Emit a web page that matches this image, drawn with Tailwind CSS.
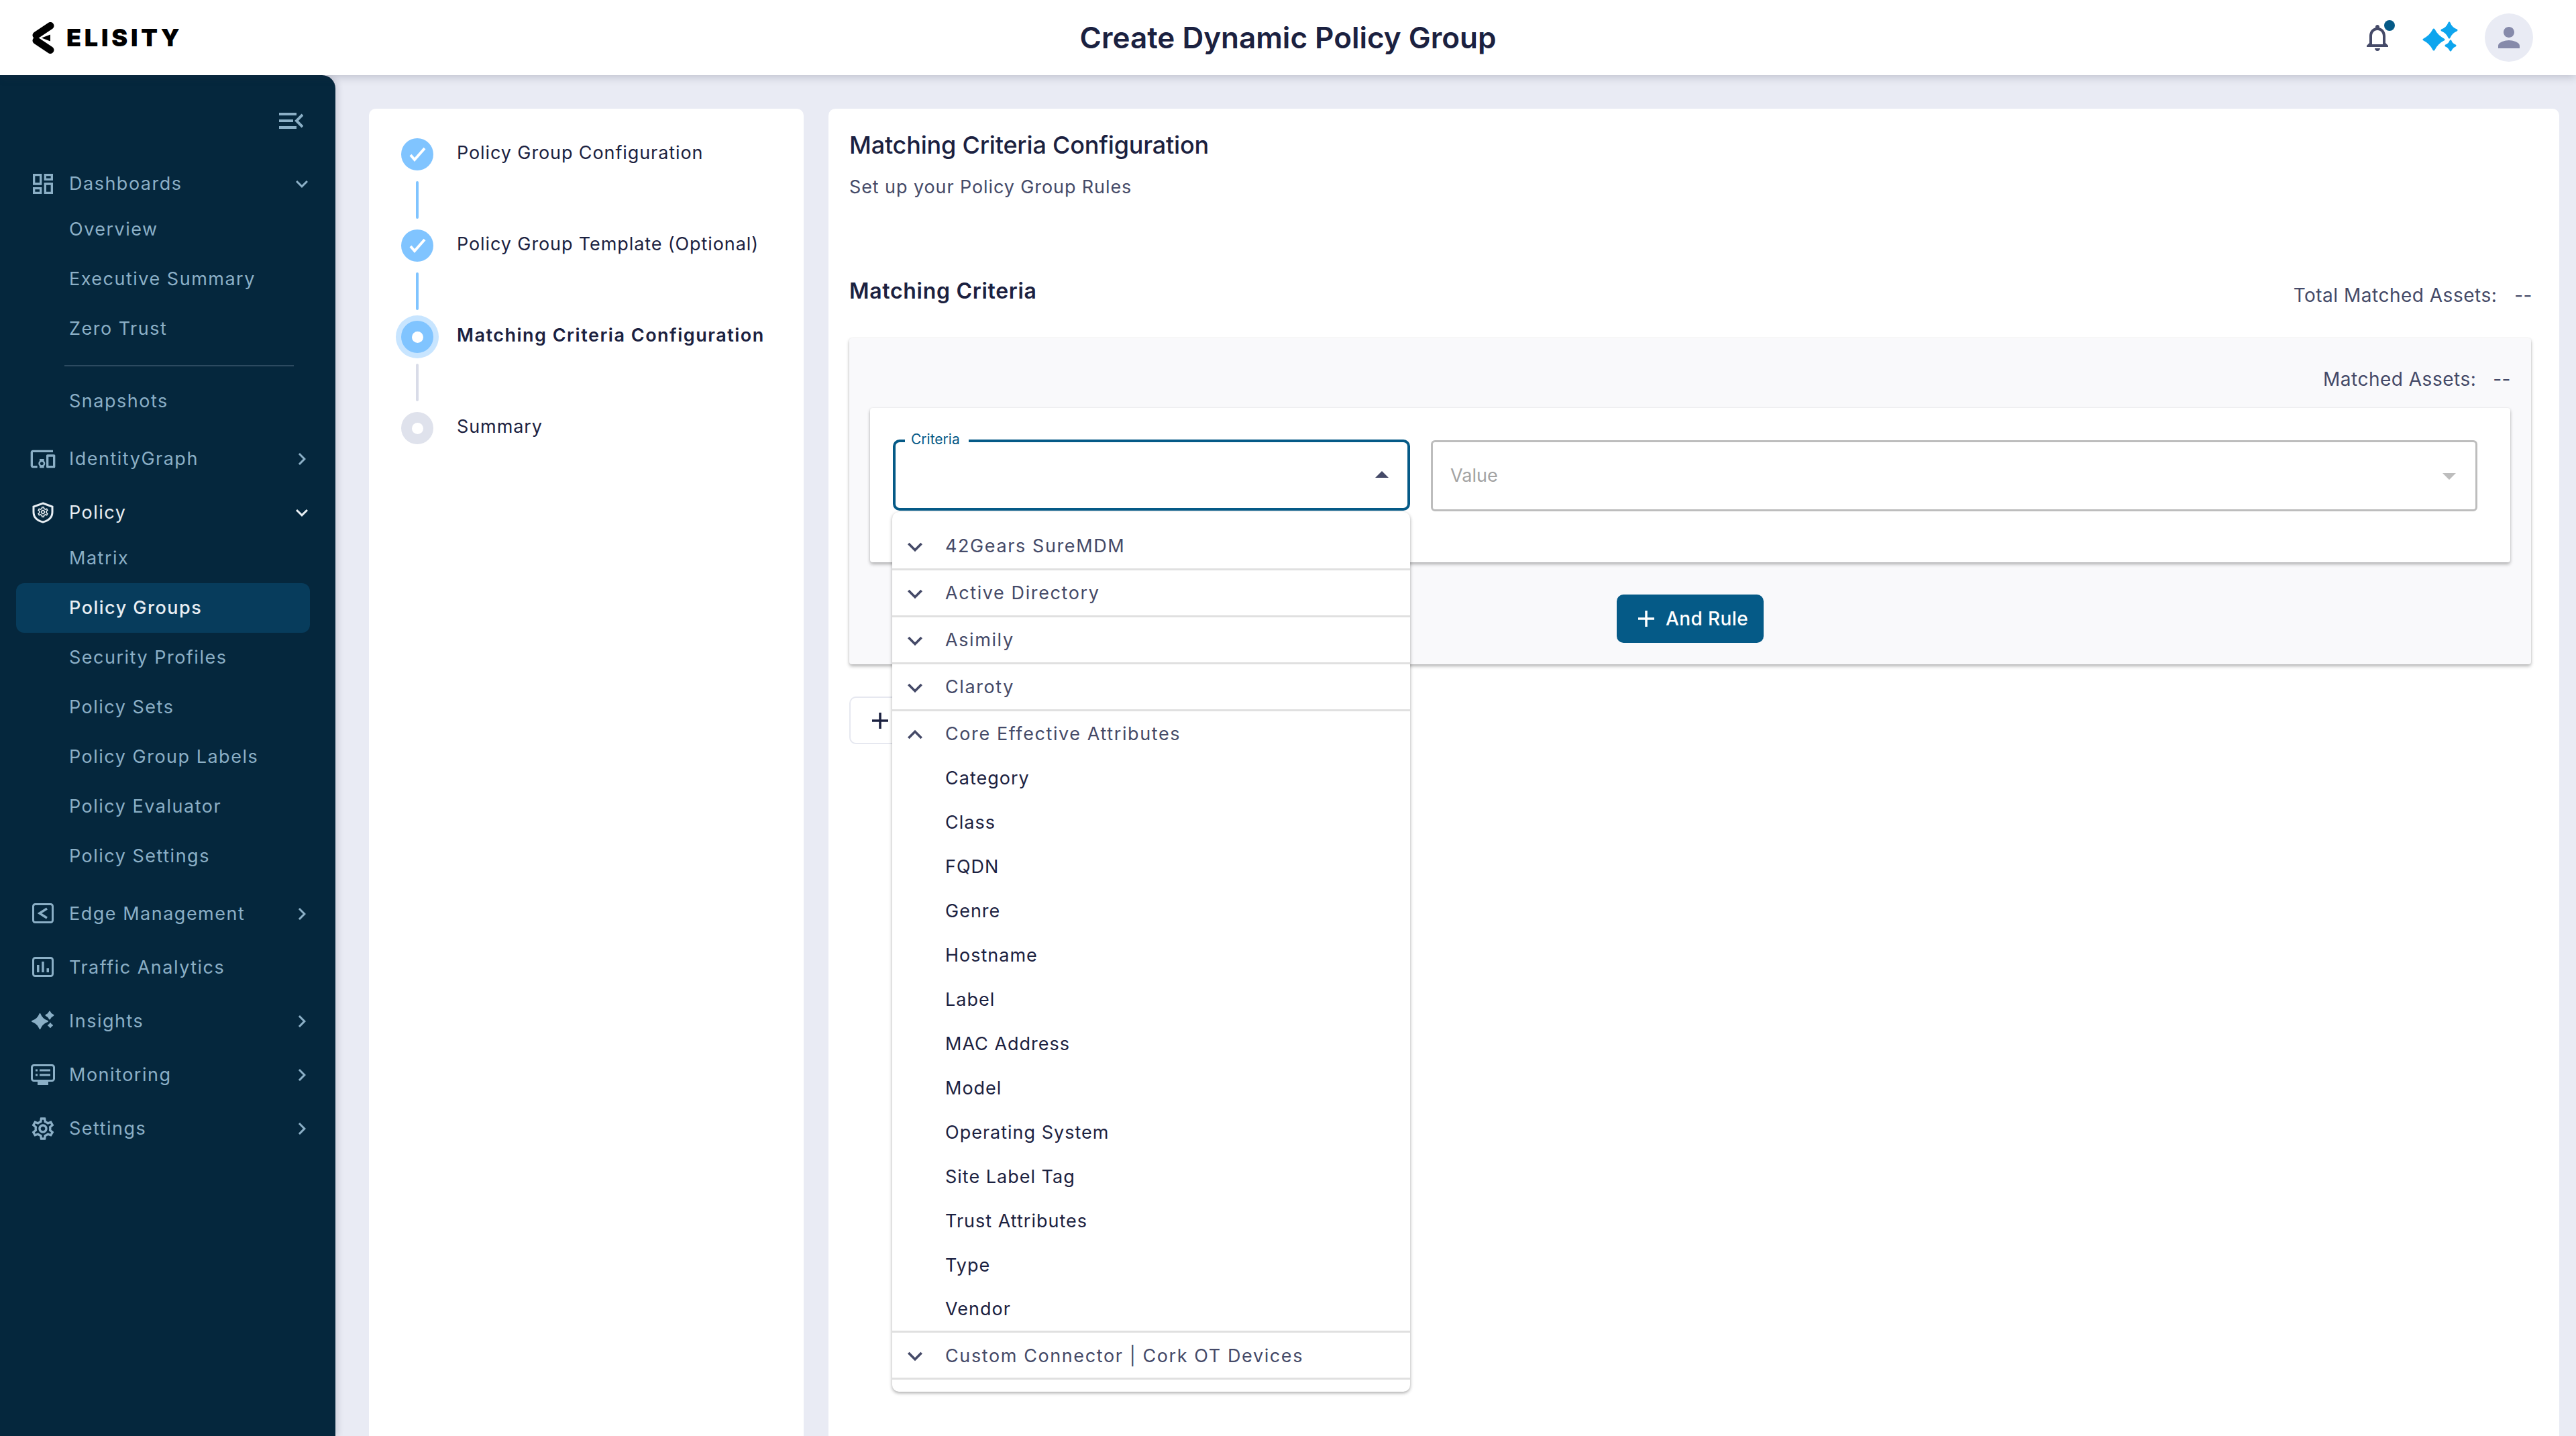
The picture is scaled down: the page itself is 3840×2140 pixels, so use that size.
<!DOCTYPE html>
<html lang="en">
<head>
    <meta charset="UTF-8">
    <meta name="viewport" content="width=device-width, initial-scale=1.0">
    <title>Create Dynamic Policy Group</title>
    <script src="https://cdn.jsdelivr.net/npm/@tailwindcss/browser@4"></script>
</head>
<body class="bg-[#e9ebf4] font-[Inter,sans-serif] h-[2140px] overflow-hidden flex flex-col">
    <!-- Header -->
    <header class="relative z-20 h-[112px] shrink-0 bg-white flex items-center justify-between pl-[48px] pr-[64px] shadow-[0_3px_12px_rgba(40,44,70,0.22)]">
        <div class="flex items-center w-[616px]">
            <svg width="33" height="47" viewBox="0 0 33 47" fill="none">
                <path d="M27 5.500 L6 19.500 M6 27.500 L27 41.500" stroke="#000" stroke-width="11" stroke-linecap="round"/>
                <path d="M14 23.500 L27 18.500 L27 28.500 Z" fill="#000"/>
            </svg>
            <span class="ml-[18px] text-[36px] leading-none font-black tracking-[4.8px] text-black">ELISITY</span>
        </div>
        <h1 class="text-[44px] font-semibold text-[#1b2140]">Create Dynamic Policy Group</h1>
        <div class="flex items-center justify-end w-[600px]">
            <div class="relative w-[48px] h-[48px]">
                <svg width="48" height="48" viewBox="0 0 24 24" fill="#454a68"><path d="M12 22c1.1 0 2-.9 2-2h-4c0 1.1.9 2 2 2zm6-6v-5c0-3.07-1.63-5.64-4.5-6.32V4c0-.83-.67-1.5-1.5-1.5s-1.5.67-1.5 1.5v.68C7.64 5.36 6 7.92 6 11v5l-2 2v1h16v-1l-2-2zm-2 1H8v-6c0-2.48 1.51-4.5 4-4.5s4 2.02 4 4.5v6z"/></svg>
                <span class="absolute left-[34px] top-[-2px] w-[16px] h-[16px] rounded-full bg-[#055a87]"></span>
            </div>
            <svg class="ml-[42px]" width="60" height="60" viewBox="0 0 60 60" fill="#0ea5ee" stroke="#0ea5ee" stroke-width="3" stroke-linejoin="round">
                <path d="M18 18 Q23 28 33 33 Q23 38 18 48 Q13 38 3 33 Q13 28 18 18Z"/>
                <path d="M41 8 Q44 16 52 19 Q44 22 41 30 Q38 22 30 19 Q38 16 41 8Z"/>
                <path d="M43 35 Q45 40 50 42 Q45 44 43 49 Q41 44 36 42 Q41 40 43 35Z"/>
            </svg>
            <div class="ml-[34px] w-[72px] h-[72px] rounded-full bg-[#e9ebf4] flex items-center justify-center">
                <svg width="48" height="48" viewBox="0 0 24 24" fill="#868aaa"><path d="M12 12c2.21 0 4-1.79 4-4s-1.79-4-4-4-4 1.79-4 4 1.79 4 4 4zm0 2c-2.67 0-8 1.34-8 4v2h16v-2c0-2.66-5.33-4-8-4z"/></svg>
            </div>
        </div>
    </header>

    <div class="flex flex-1 min-h-0">
        <!-- Sidebar -->
        <aside class="relative z-10 w-[500px] shrink-0 bg-[#05273d] rounded-tr-[20px] pt-[56px] shadow-[4px_0_10px_rgba(40,44,70,0.14)] text-[27px] tracking-[1.5px] text-[#8bafc6]">
            <div class="flex justify-end pr-[48px] mb-[51px]">
                <svg width="36" height="24" viewBox="0 0 36 24" fill="none" stroke="#8bafc6">
                    <path d="M0 2h26M0 12h21M0 22h26" stroke-width="4"/>
                    <path d="M35 3 L26 12 L35 21" stroke-width="4"/>
                </svg>
            </div>

            <nav class="flex flex-col gap-[18px]">
                <div>
                    <div class="flex items-center h-[62px] pl-[44px] pr-[32px]">
                        <svg width="40" height="40" viewBox="0 0 24 24" fill="#8bafc6"><path d="M19 5v2h-4V5h4M9 5v6H5V5h4m10 8v6h-4v-6h4M9 17v2H5v-2h4M21 3h-8v6h8V3zM11 3H3v10h8V3zm10 8h-8v10h8V11zm-10 4H3v6h8v-6z"/></svg>
                        <span class="ml-[19px]">Dashboards</span>
                        <svg class="ml-auto" width="36" height="36" viewBox="0 0 24 24" fill="#8bafc6"><path d="M7.41 8.59 12 13.17l4.59-4.58L18 10l-6 6-6-6 1.41-1.41z"/></svg>
                    </div>
                    <div class="flex items-center h-[74px] pl-[103px]">Overview</div>
                    <div class="flex items-center h-[74px] pl-[103px]">Executive Summary</div>
                    <div class="flex items-center h-[74px] pl-[103px]">Zero Trust</div>
                    <div class="ml-[96px] w-[342px] h-[2px] bg-[#2c4a60] mt-[17px] mb-[15px]"></div>
                    <div class="flex items-center h-[74px] pl-[103px]">Snapshots</div>
                </div>

                <div class="flex items-center h-[62px] pl-[44px] pr-[32px]">
                    <svg width="40" height="40" viewBox="0 0 24 24" fill="#8bafc6"><path d="M3 6h18V4H3c-1.1 0-2 .9-2 2v12c0 1.1.9 2 2 2h4v-2H3V6zm10 6H9v1.78c-.61.55-1 1.33-1 2.22s.39 1.67 1 2.22V20h4v-1.78c.61-.55 1-1.34 1-2.22s-.39-1.67-1-2.22V12zm-2 5.5c-.83 0-1.5-.67-1.5-1.5s.67-1.5 1.5-1.5 1.5.67 1.5 1.5-.67 1.5-1.5 1.5zM22 8h-6c-.5 0-1 .5-1 1v10c0 .5.5 1 1 1h6c.5 0 1-.5 1-1V9c0-.5-.5-1-1-1zm-1 10h-4v-8h4v8z"/></svg>
                    <span class="ml-[19px]">IdentityGraph</span>
                    <svg class="ml-auto" width="36" height="36" viewBox="0 0 24 24" fill="#8bafc6"><path d="M10 6 8.59 7.41 13.17 12l-4.58 4.59L10 18l6-6z"/></svg>
                </div>

                <div>
                    <div class="flex items-center h-[62px] pl-[44px] pr-[32px] text-[#e8eef3]">
                        <svg width="40" height="40" viewBox="0 0 40 40" fill="none">
                            <path d="M20 6 L34 11 V19 C34 27 28 32 20 34 C12 32 6 27 6 19 V11 Z" stroke="#e8eef3" stroke-width="3"/>
                            <g transform="translate(10.4 9.4) scale(.8)" fill="#e8eef3"><path d="M19.43 12.98c.04-.32.07-.64.07-.98 0-.34-.03-.66-.07-.98l2.11-1.65c.19-.15.24-.42.12-.64l-2-3.46c-.09-.16-.26-.25-.44-.25-.06 0-.12.01-.17.03l-2.49 1c-.52-.4-1.08-.73-1.69-.98l-.38-2.65C14.46 2.18 14.25 2 14 2h-4c-.25 0-.46.18-.49.42l-.38 2.65c-.61.25-1.17.59-1.69.98l-2.49-1c-.06-.02-.12-.03-.18-.03-.17 0-.34.09-.43.25l-2 3.46c-.13.22-.07.49.12.64l2.11 1.65c-.04.32-.07.65-.07.98 0 .33.03.66.07.98l-2.11 1.65c-.19.15-.24.42-.12.64l2 3.46c.09.16.26.25.44.25.06 0 .12-.01.17-.03l2.49-1c.52.4 1.08.73 1.69.98l.38 2.65c.03.24.24.42.49.42h4c.25 0 .46-.18.49-.42l.38-2.65c.61-.25 1.17-.59 1.69-.98l2.49 1c.06.02.12.03.18.03.17 0 .34-.09.43-.25l2-3.46c.12-.22.07-.49-.12-.64l-2.11-1.65zm-1.98-1.71c.04.31.05.52.05.73 0 .21-.02.43-.05.73l-.14 1.13.89.7 1.08.84-.7 1.21-1.27-.51-1.04-.42-.9.68c-.43.32-.84.56-1.25.73l-1.06.43-.16 1.13-.2 1.35h-1.4l-.19-1.35-.16-1.13-1.06-.43c-.43-.18-.83-.41-1.23-.71l-.91-.7-1.06.43-1.27.51-.7-1.21 1.08-.84.89-.7-.14-1.13c-.03-.31-.05-.54-.05-.74s.02-.43.05-.73l.14-1.13-.89-.7-1.08-.84.7-1.21 1.27.51 1.04.42.9-.68c.43-.32.84-.56 1.25-.73l1.06-.43.16-1.13.2-1.35h1.39l.19 1.35.16 1.13 1.06.43c.43.18.83.41 1.23.71l.91.7 1.06-.43 1.27-.51.7 1.21-1.07.85-.89.7.14 1.13zM12 8c-2.21 0-4 1.79-4 4s1.79 4 4 4 4-1.79 4-4-1.79-4-4-4zm0 6c-1.1 0-2-.9-2-2s.9-2 2-2 2 .9 2 2-.9 2-2 2z"/></g>
                        </svg>
                        <span class="ml-[19px]">Policy</span>
                        <svg class="ml-auto" width="36" height="36" viewBox="0 0 24 24" fill="#e8eef3"><path d="M7.41 8.59 12 13.17l4.59-4.58L18 10l-6 6-6-6 1.41-1.41z"/></svg>
                    </div>
                    <div class="flex items-center h-[74px] pl-[103px]">Matrix</div>
                    <div class="flex items-center h-[74px] ml-[24px] w-[438px] pl-[79px] rounded-[12px] bg-[#073c5c] text-[#e8eef3] font-medium">Policy Groups</div>
                    <div class="flex items-center h-[74px] pl-[103px]">Security Profiles</div>
                    <div class="flex items-center h-[74px] pl-[103px]">Policy Sets</div>
                    <div class="flex items-center h-[74px] pl-[103px]">Policy Group Labels</div>
                    <div class="flex items-center h-[74px] pl-[103px]">Policy Evaluator</div>
                    <div class="flex items-center h-[74px] pl-[103px]">Policy Settings</div>
                </div>

                <div class="flex items-center h-[62px] pl-[44px] pr-[32px]">
                    <svg width="40" height="40" viewBox="0 0 40 40" fill="none" stroke="#8bafc6">
                        <rect x="5.5" y="5.5" width="29" height="27" rx="3" stroke-width="3"/>
                        <path d="M26 12 L15 19 L26 26" stroke-width="3.5"/>
                    </svg>
                    <span class="ml-[19px]">Edge Management</span>
                    <svg class="ml-auto" width="36" height="36" viewBox="0 0 24 24" fill="#8bafc6"><path d="M10 6 8.59 7.41 13.17 12l-4.58 4.59L10 18l6-6z"/></svg>
                </div>
                <div class="flex items-center h-[62px] pl-[44px] pr-[32px]">
                    <svg width="40" height="40" viewBox="0 0 40 40" fill="none">
                        <rect x="5.5" y="5.5" width="29" height="27" rx="3" stroke="#8bafc6" stroke-width="3"/>
                        <path d="M11 16h3.500v11H11zM18.200 11h3.500v16h-3.500zM25.500 21H29v6h-3.500z" fill="#8bafc6"/>
                    </svg>
                    <span class="ml-[19px]">Traffic Analytics</span>
                </div>
                <div class="flex items-center h-[62px] pl-[44px] pr-[32px]">
                    <svg width="40" height="40" viewBox="0 0 40 40" fill="#8bafc6" stroke="#8bafc6" stroke-width="2" stroke-linejoin="round">
                        <path d="M15.500 9 Q18.500 17 27 20 Q18.500 23 15.500 31 Q12.500 23 4 20 Q12.500 17 15.500 9Z"/>
                        <path d="M30 5.500 Q31.500 9.500 35.500 11 Q31.500 12.500 30 16.500 Q28.500 12.500 24.500 11 Q28.500 9.500 30 5.500Z"/>
                        <path d="M31 23 Q31.800 25.200 34 26 Q31.800 26.800 31 29 Q30.200 26.800 28 26 Q30.200 25.200 31 23Z"/>
                    </svg>
                    <span class="ml-[19px]">Insights</span>
                    <svg class="ml-auto" width="36" height="36" viewBox="0 0 24 24" fill="#8bafc6"><path d="M10 6 8.59 7.41 13.17 12l-4.58 4.59L10 18l6-6z"/></svg>
                </div>
                <div class="flex items-center h-[62px] pl-[44px] pr-[32px]">
                    <svg width="40" height="40" viewBox="0 0 40 40" fill="none" stroke="#8bafc6">
                        <rect x="3.500" y="5.500" width="33" height="23" rx="3" stroke-width="3"/>
                        <path d="M9 13h3M15 13h16M9 20h3M15 20h16" stroke-width="3"/>
                        <path d="M12 32.500h16" stroke-width="5"/>
                    </svg>
                    <span class="ml-[19px]">Monitoring</span>
                    <svg class="ml-auto" width="36" height="36" viewBox="0 0 24 24" fill="#8bafc6"><path d="M10 6 8.59 7.41 13.17 12l-4.58 4.59L10 18l6-6z"/></svg>
                </div>
                <div class="flex items-center h-[62px] pl-[44px] pr-[32px]">
                    <svg width="40" height="40" viewBox="0 0 24 24" fill="#8bafc6"><path d="M19.43 12.98c.04-.32.07-.64.07-.98 0-.34-.03-.66-.07-.98l2.11-1.65c.19-.15.24-.42.12-.64l-2-3.46c-.09-.16-.26-.25-.44-.25-.06 0-.12.01-.17.03l-2.49 1c-.52-.4-1.08-.73-1.69-.98l-.38-2.65C14.46 2.18 14.25 2 14 2h-4c-.25 0-.46.18-.49.42l-.38 2.65c-.61.25-1.17.59-1.69.98l-2.49-1c-.06-.02-.12-.03-.18-.03-.17 0-.34.09-.43.25l-2 3.46c-.13.22-.07.49.12.64l2.11 1.65c-.04.32-.07.65-.07.98 0 .33.03.66.07.98l-2.11 1.65c-.19.15-.24.42-.12.64l2 3.46c.09.16.26.25.44.25.06 0 .12-.01.17-.03l2.49-1c.52.4 1.08.73 1.69.98l.38 2.65c.03.24.24.42.49.42h4c.25 0 .46-.18.49-.42l.38-2.65c.61-.25 1.17-.59 1.69-.98l2.49 1c.06.02.12.03.18.03.17 0 .34-.09.43-.25l2-3.46c.12-.22.07-.49-.12-.64l-2.11-1.65zm-1.98-1.71c.04.31.05.52.05.73 0 .21-.02.43-.05.73l-.14 1.13.89.7 1.08.84-.7 1.21-1.27-.51-1.04-.42-.9.68c-.43.32-.84.56-1.25.73l-1.06.43-.16 1.13-.2 1.35h-1.4l-.19-1.35-.16-1.13-1.06-.43c-.43-.18-.83-.41-1.23-.71l-.91-.7-1.06.43-1.27.51-.7-1.21 1.08-.84.89-.7-.14-1.13c-.03-.31-.05-.54-.05-.74s.02-.43.05-.73l.14-1.13-.89-.7-1.08-.84.7-1.21 1.27.51 1.04.42.9-.68c.43-.32.84-.56 1.25-.73l1.06-.43.16-1.13.2-1.35h1.39l.19 1.35.16 1.13 1.06.43c.43.18.83.41 1.23.71l.91.7 1.06-.43 1.27-.51.7 1.21-1.07.85-.89.7.14 1.13zM12 8c-2.21 0-4 1.79-4 4s1.79 4 4 4 4-1.79 4-4-1.79-4-4-4zm0 6c-1.1 0-2-.9-2-2s.9-2 2-2 2 .9 2 2-.9 2-2 2z"/></svg>
                    <span class="ml-[19px]">Settings</span>
                    <svg class="ml-auto" width="36" height="36" viewBox="0 0 24 24" fill="#8bafc6"><path d="M10 6 8.59 7.41 13.17 12l-4.58 4.59L10 18l6-6z"/></svg>
                </div>
            </nav>
        </aside>

        <main class="flex-1 flex gap-[37px] pt-[50px] pl-[50px] pr-[25px] min-w-0">
            <!-- Stepper -->
            <section class="w-[648px] shrink-0 bg-white rounded-t-[10px] pl-[48px] pt-[44px] text-[27px] tracking-[0.9px] text-[#1b2140]">
                <div class="flex items-center">
                    <div class="w-[48px] h-[48px] rounded-full bg-[#80c4ff] flex items-center justify-center">
                        <svg width="48" height="48" viewBox="0 0 48 48" fill="none"><path d="M14 25 L20 32 L35 15" stroke="#fff" stroke-width="4"/></svg>
                    </div>
                    <span class="ml-[35px] mb-[4px]">Policy Group Configuration</span>
                </div>
                <div class="ml-[22px] w-[4px] h-[56px] my-[16px] rounded-full bg-[#80c4ff]"></div>
                <div class="flex items-center">
                    <div class="w-[48px] h-[48px] rounded-full bg-[#80c4ff] flex items-center justify-center">
                        <svg width="48" height="48" viewBox="0 0 48 48" fill="none"><path d="M14 25 L20 32 L35 15" stroke="#fff" stroke-width="4"/></svg>
                    </div>
                    <span class="ml-[35px] mb-[4px]">Policy Group Template (Optional)</span>
                </div>
                <div class="ml-[22px] w-[4px] h-[56px] my-[16px] rounded-full bg-[#80c4ff]"></div>
                <div class="flex items-center">
                    <div class="w-[48px] h-[48px] rounded-full bg-[#80c4ff] ring-[8px] ring-[#c8e5ff] flex items-center justify-center">
                        <span class="w-[17px] h-[17px] rounded-full bg-white"></span>
                    </div>
                    <span class="ml-[35px] mb-[4px] font-semibold tracking-[1.5px]">Matching Criteria Configuration</span>
                </div>
                <div class="ml-[22px] w-[4px] h-[56px] my-[16px] rounded-full bg-[#d9dce8]"></div>
                <div class="flex items-center">
                    <div class="w-[48px] h-[48px] rounded-full bg-[#dfe2ec] flex items-center justify-center">
                        <span class="w-[17px] h-[17px] rounded-full bg-white"></span>
                    </div>
                    <span class="ml-[35px] mb-[4px]">Summary</span>
                </div>
            </section>

            <!-- Matching criteria -->
            <section class="flex-1 min-w-0 bg-white rounded-t-[10px] pl-[31px] pr-[42px] pt-[34px] text-[#1b2140]">
                <h2 class="h-[40px] flex items-center text-[36px] font-medium tracking-[-0.2px]">Matching Criteria Configuration</h2>
                <p class="h-[40px] mt-[23px] flex items-center text-[27px] tracking-[0.9px] text-[#454a68]">Set up your Policy Group Rules</p>

                <div class="mt-[113px] h-[48px] flex justify-between">
                    <h3 class="h-[40px] mt-[2px] flex items-center text-[32px] font-semibold tracking-[0.7px]">Matching Criteria</h3>
                    <div class="h-[40px] mt-[8px] mr-[-2px] flex items-center text-[28px] tracking-[0.5px] text-[#454a68]">
                        <span>Total Matched Assets:</span><span class="ml-[26px]">--</span>
                    </div>
                </div>

                <div class="mt-[44px] h-[486px] bg-[#f9f9fb] rounded-[4px] pt-[41px] shadow-[0_0_3px_rgba(0,0,0,0.08),0_3px_5px_rgba(0,0,0,0.28)]">
                    <div class="h-[40px] flex items-center justify-end pr-[30px] text-[28px] tracking-[0.5px] text-[#454a68]">
                        <span>Matched Assets:</span><span class="ml-[25px]">--</span>
                    </div>
                    <div class="mx-[31px] mt-[23px] h-[230px] bg-white rounded-[4px] pl-[34px] pr-[49px] pt-[48px] flex gap-[31px] shadow-[0_0_3px_rgba(0,0,0,0.08),0_3px_5px_rgba(0,0,0,0.28)]">
                        <!-- Criteria field, open -->
                        <div class="relative w-[771px] h-[106px] shrink-0 -mt-[1px] rounded-[10px] border-[4px] border-[#055a87]">
                            <span class="absolute left-[14px] top-[-18px] w-[95px] h-[28px] pl-[9px] bg-white text-[21px] leading-[28px] text-[#055a87]">Criteria</span>
                            <svg class="absolute left-[715px] top-[43px]" width="20" height="10" viewBox="0 0 20 10" fill="#454a68"><path d="M10 0 L20 10 H0Z"/></svg>

                            <div class="absolute z-10 left-[-5px] top-[104px] w-[772px] bg-white rounded-[10px] pt-[17px] pb-[18px] text-[27px] tracking-[1.6px] text-[#454a68] shadow-[0_2px_5px_rgba(0,0,0,0.35)]">
                                <div class="flex items-center h-[70px] pl-[12px] pt-[2px] border-b-[3px] border-[#e0e0e0]">
                                    <svg width="44" height="44" viewBox="0 0 24 24" fill="#454a68"><path d="M7.41 8.59 12 13.17l4.59-4.58L18 10l-6 6-6-6 1.41-1.41z"/></svg>
                                    <span class="ml-[23px]">42Gears SureMDM</span>
                                </div>
                                <div class="flex items-center h-[70px] pl-[12px] pt-[2px] border-b-[3px] border-[#e0e0e0]">
                                    <svg width="44" height="44" viewBox="0 0 24 24" fill="#454a68"><path d="M7.41 8.59 12 13.17l4.59-4.58L18 10l-6 6-6-6 1.41-1.41z"/></svg>
                                    <span class="ml-[23px]">Active Directory</span>
                                </div>
                                <div class="flex items-center h-[70px] pl-[12px] pt-[2px] border-b-[3px] border-[#e0e0e0]">
                                    <svg width="44" height="44" viewBox="0 0 24 24" fill="#454a68"><path d="M7.41 8.59 12 13.17l4.59-4.58L18 10l-6 6-6-6 1.41-1.41z"/></svg>
                                    <span class="ml-[23px]">Asimily</span>
                                </div>
                                <div class="flex items-center h-[70px] pl-[12px] pt-[2px] border-b-[3px] border-[#e0e0e0]">
                                    <svg width="44" height="44" viewBox="0 0 24 24" fill="#454a68"><path d="M7.41 8.59 12 13.17l4.59-4.58L18 10l-6 6-6-6 1.41-1.41z"/></svg>
                                    <span class="ml-[23px]">Claroty</span>
                                </div>
                                <div class="flex items-center h-[67px] pl-[12px] pt-[2px]">
                                    <svg width="44" height="44" viewBox="0 0 24 24" fill="#454a68"><path d="M12 8l-6 6 1.41 1.41L12 10.83l4.59 4.58L18 14z"/></svg>
                                    <span class="ml-[23px]">Core Effective Attributes</span>
                                </div>
                                <ul class="pl-[79px] text-[#1b2140] tracking-[1px] border-b-[3px] border-[#e0e0e0]">
                                    <li class="h-[66px] flex items-center">Category</li>
                                    <li class="h-[66px] flex items-center">Class</li>
                                    <li class="h-[66px] flex items-center">FQDN</li>
                                    <li class="h-[66px] flex items-center">Genre</li>
                                    <li class="h-[66px] flex items-center">Hostname</li>
                                    <li class="h-[66px] flex items-center">Label</li>
                                    <li class="h-[66px] flex items-center">MAC Address</li>
                                    <li class="h-[66px] flex items-center">Model</li>
                                    <li class="h-[66px] flex items-center">Operating System</li>
                                    <li class="h-[66px] flex items-center">Site Label Tag</li>
                                    <li class="h-[66px] flex items-center">Trust Attributes</li>
                                    <li class="h-[66px] flex items-center">Type</li>
                                    <li class="h-[64px] flex items-center">Vendor</li>
                                </ul>
                                <div class="flex items-center h-[70px] pl-[12px] pt-[3px] border-b-[3px] border-[#e0e0e0]">
                                    <svg width="44" height="44" viewBox="0 0 24 24" fill="#454a68"><path d="M7.41 8.59 12 13.17l4.59-4.58L18 10l-6 6-6-6 1.41-1.41z"/></svg>
                                    <span class="ml-[23px]">Custom Connector | Cork OT Devices</span>
                                </div>
                            </div>
                        </div>

                        <!-- Value field -->
                        <div class="relative flex-1 h-[106px] rounded-[6px] border-[3px] border-[#bdbdbd] flex items-center pl-[26px] text-[27px] text-[#a3a3a3]">
                            Value
                            <svg class="absolute right-[29px] top-[46px]" width="20" height="10" viewBox="0 0 20 10" fill="#bdbdbd"><path d="M0 0 H20 L10 10Z"/></svg>
                        </div>
                    </div>
                    <div class="mt-[48px] flex justify-center">
                        <button class="w-[219px] h-[72px] pl-[32px] rounded-[10px] bg-[#055a87] flex items-center text-white text-[28px] font-medium tracking-[0.4px]">
                            <svg width="24" height="24" viewBox="0 0 24 24" fill="none" stroke="#fff" stroke-width="3.500"><path d="M12 0v24M0 12h24"/></svg>
                            <span class="ml-[17px]">And Rule</span>
                        </button>
                    </div>
                </div>

                <div class="mt-[48px] w-[160px] h-[71px] rounded-[10px] border-[2px] border-[#e6e8f0] flex items-center pl-[32px]">
                    <svg width="24" height="24" viewBox="0 0 24 24" fill="none" stroke="#1b2140" stroke-width="3.500"><path d="M12 0v24M0 12h24"/></svg>
                </div>
            </section>
        </main>
    </div>
</body>
</html>
